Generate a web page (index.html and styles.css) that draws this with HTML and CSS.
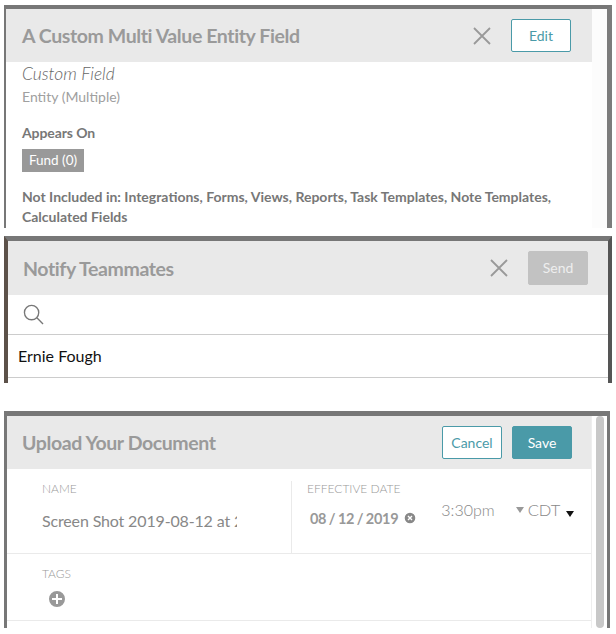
FILE: index.html
```html
<!DOCTYPE html>
<html lang="en">
<head>
    <meta charset="UTF-8">
    <title>Modals</title>
    <link rel="stylesheet" href="styles.css">
</head>
<body>
<div class="modal modal1">
    <div class="main">
        <div class="head">
            <h2>A Custom Multi Value Entity Field</h2>
            <svg class="close" viewBox="0 0 18 18"><path d="M1 1L17 17M17 1L1 17"/></svg>
            <span class="btn btn-line btn-edit">Edit</span>
        </div>
        <div class="field-body">
            <p class="kind">Custom Field</p>
            <p class="type">Entity (Multiple)</p>
            <p class="appears">Appears On</p>
            <span class="tag">Fund (0)</span>
            <p class="excluded">Not Included in: Integrations, Forms, Views, Reports, Task Templates, Note Templates, Calculated Fields</p>
        </div>
    </div>
</div>

<div class="modal modal2">
    <div class="head">
        <h2>Notify Teammates</h2>
        <svg class="close" viewBox="0 0 18 18"><path d="M1 1L17 17M17 1L1 17"/></svg>
        <span class="btn btn-off">Send</span>
    </div>
    <div class="search">
        <svg viewBox="0 0 22 22"><circle cx="9" cy="9" r="7.5"/><path d="M14.5 14.5L21 21"/></svg>
    </div>
    <div class="person">Ernie Fough</div>
</div>

<div class="modal modal3">
    <div class="main">
        <div class="head">
            <h2>Upload Your Document</h2>
            <span class="btn btn-line">Cancel</span>
            <span class="btn btn-save">Save</span>
        </div>
        <div class="row row-doc">
            <div class="col-name">
                <label>NAME</label>
                <div class="doc-name">Screen Shot 2019-08-12 at 2</div>
            </div>
            <div class="col-date">
                <label>EFFECTIVE DATE</label>
                <div class="date-line">
                    <span class="date">08 / 12 / 2019</span>
                    <svg class="clear" viewBox="0 0 12 12"><circle cx="6" cy="6" r="6"/><path d="M4 4L8 8M8 4L4 8"/></svg>
                    <span class="time">3:30pm</span>
                    <span class="arrow"></span>
                    <span class="zone">CDT</span>
                    <span class="arrow arrow-dark"></span>
                </div>
            </div>
        </div>
        <div class="row row-tags">
            <label>TAGS</label>
            <svg class="add" viewBox="0 0 18 18"><circle cx="9" cy="9" r="9"/><path d="M9 4V14M4 9H14"/></svg>
        </div>
    </div>
    <div class="scroll"><div class="thumb"></div></div>
</div>
</body>
</html>
```

FILE: styles.css
```css
* {
    margin: 0;
    padding: 0;
    box-sizing: border-box;
}
body {
    width: 616px;
    height: 634px;
    overflow: hidden;
    background: #fff;
    font-family: Lato, "Open Sans", sans-serif;
    padding: 5px 4px 0 4px;
}
.modal {
    width: 608px;
    background: #fff;
    border-top: 4px solid #777;
    border-left: 2px solid #777;
}
.modal1 {
    height: 223px;
    display: flex;
    background: #fcfcfc;
    border-right: 5px solid #7c7c7c;
}
.modal1 .main {
    width: 586px;
    background: #fff;
    overflow: hidden;
}
.head {
    display: flex;
    align-items: center;
    height: 53px;
    background: #e9e9e9;
    padding: 0 21px 0 16px;
}
.head h2 {
    flex: 1;
    font-size: 19.5px;
    font-weight: 700;
    letter-spacing: -0.4px;
    color: #9a9a9a;
}
.close {
    width: 18px;
    height: 18px;
    margin-right: 20px;
    fill: none;
    stroke: #999;
    stroke-width: 1.8;
}
.btn {
    width: 60px;
    height: 33px;
    line-height: 31px;
    border: 1px solid #4a9aa8;
    border-radius: 2px;
    text-align: center;
    font-size: 14px;
}
.btn-line {
    background: #fff;
    color: #4a9aa8;
}
.btn-off {
    height: 34px;
    background: #c2c2c2;
    border-color: #c2c2c2;
    color: #eee;
}
.btn-save {
    margin-left: 10px;
    background: #4a9aa8;
    color: #fff;
}
.field-body {
    padding: 2px 0 0 16px;
    color: #777;
}
.kind {
    font-size: 17.4px;
    font-style: italic;
    font-weight: 300;
    line-height: 20px;
    color: #666;
}
.type {
    font-size: 14px;
    line-height: 20px;
    margin-top: 3px;
    color: #a0a0a0;
}
.appears {
    font-size: 14px;
    font-weight: 700;
    letter-spacing: -0.1px;
    line-height: 20px;
    margin-top: 16px;
}
.tag {
    display: block;
    width: 62px;
    height: 23px;
    line-height: 23px;
    margin-top: 6px;
    background: #999;
    color: #fff;
    font-size: 13.5px;
    text-align: center;
}
.excluded {
    font-size: 14px;
    font-weight: 700;
    line-height: 20px;
    margin-top: 15px;
    width: 545px;
}
.modal2 {
    height: 147px;
    margin-top: 8px;
    border-top-width: 5px;
    border-left: 4px solid #5c5149;
    border-right: 4px solid #555;
}
.modal2 .head {
    height: 54px;
    padding: 0 20px 0 15px;
}
.search {
    height: 40px;
    padding: 9px 0 0 15px;
    border-bottom: 1px solid #ccc;
}
.search svg {
    display: block;
    width: 21px;
    height: 21px;
    fill: none;
    stroke: #777;
    stroke-width: 1.4;
}
.person {
    height: 43px;
    line-height: 41px;
    padding-left: 10px;
    font-size: 16px;
    color: #111;
    border-bottom: 1px solid #ccc;
}
.modal3 {
    width: 606px;
    height: 217px;
    margin-top: 28px;
    border-top-width: 5px;
    border-left-width: 3px;
    border-right: 3px solid #777;
    display: flex;
}
.modal3 .main {
    width: 585px;
    border-right: 1px solid #eee;
}
.modal3 .head {
    height: 53px;
    padding: 0 19px 0 15px;
}
.row {
    border-bottom: 1px solid #eaeaea;
}
.row label {
    display: block;
    font-size: 12px;
    font-weight: 300;
    color: #999;
}
.row-doc {
    height: 85px;
    display: flex;
    padding-top: 12px;
}
.col-name {
    width: 285px;
    padding-left: 35px;
    border-right: 1px solid #eaeaea;
}
.doc-name {
    width: 195px;
    margin-top: 15px;
    font-size: 16px;
    letter-spacing: -0.15px;
    color: #888;
    white-space: nowrap;
    overflow: hidden;
}
.col-date {
    padding-left: 15px;
}
.date-line {
    display: flex;
    align-items: flex-start;
    margin-top: 4px;
    color: #999;
}
.date {
    margin: 10px 0 0 3px;
    font-size: 14.5px;
    font-weight: 700;
    letter-spacing: -0.3px;
    word-spacing: -0.6px;
}
.clear {
    width: 12px;
    height: 12px;
    margin: 12px 0 0 6px;
    fill: #888;
    stroke: #fff;
    stroke-width: 1.4;
}
.time {
    margin-left: 25px;
    font-size: 16px;
    font-weight: 300;
    color: #888;
}
.arrow {
    margin: 7px 4px 0 21px;
    border: 4px solid transparent;
    border-top: 6px solid #999;
    border-bottom: 0;
}
.arrow-dark {
    margin: 11px 0 0 6px;
    border-top-color: #111;
}
.zone {
    font-size: 16.5px;
    font-weight: 300;
    color: #888;
}
.row-tags {
    height: 67px;
    padding: 12px 0 0 35px;
}
.add {
    display: block;
    width: 18px;
    height: 18px;
    margin: 9px 0 0 6px;
    fill: #999;
    stroke: #fff;
    stroke-width: 2;
}
.scroll {
    width: 15px;
    padding-left: 4px;
}
.thumb {
    width: 8px;
    height: 212px;
    background: #c8c8c8;
    border-radius: 4px;
}
```
